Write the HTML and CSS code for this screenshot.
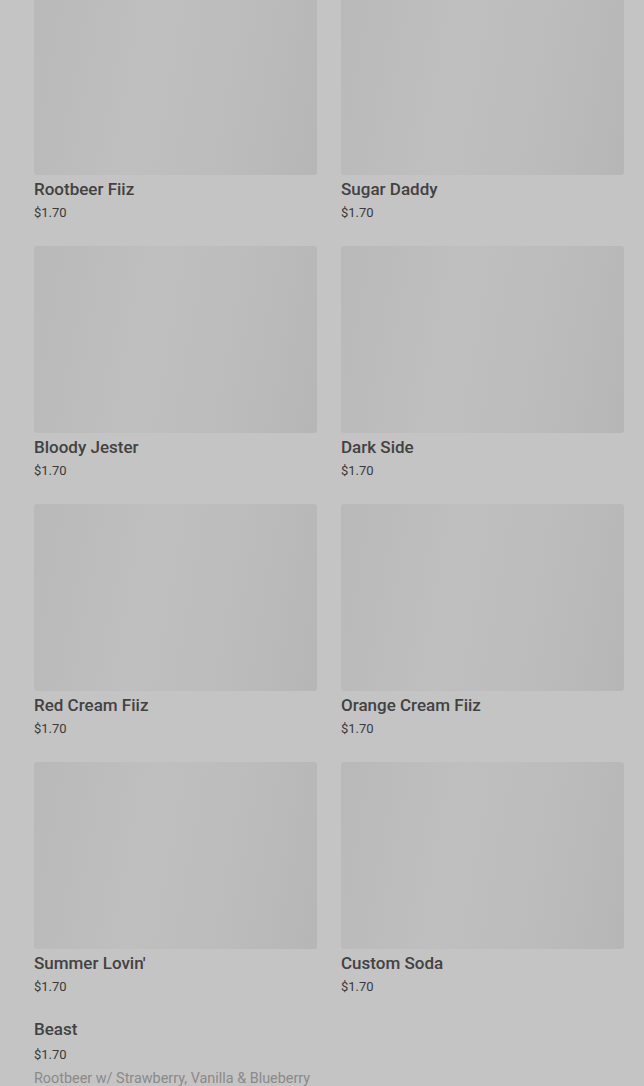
FILE: index.html
```html
<!DOCTYPE html>
<html lang="en">
<head>
  <meta charset="UTF-8">
  <meta name="viewport" content="width=device-width, initial-scale=1.0">
  <title>Sodas</title>
  <link rel="stylesheet" href="styles.css">
</head>
<body>

  <div id="products">
    <div class="product">
      <div class="thumb"></div>
      <h3>Rootbeer Fiiz</h3>
      <p class="price">$1.70</p>
    </div>
    <div class="product">
      <div class="thumb"></div>
      <h3>Sugar Daddy</h3>
      <p class="price">$1.70</p>
    </div>
    <div class="product">
      <div class="thumb"></div>
      <h3>Bloody Jester</h3>
      <p class="price">$1.70</p>
    </div>
    <div class="product">
      <div class="thumb"></div>
      <h3>Dark Side</h3>
      <p class="price">$1.70</p>
    </div>
    <div class="product">
      <div class="thumb"></div>
      <h3>Red Cream Fiiz</h3>
      <p class="price">$1.70</p>
    </div>
    <div class="product">
      <div class="thumb"></div>
      <h3>Orange Cream Fiiz</h3>
      <p class="price">$1.70</p>
    </div>
    <div class="product">
      <div class="thumb"></div>
      <h3>Summer Lovin'</h3>
      <p class="price">$1.70</p>
    </div>
    <div class="product">
      <div class="thumb"></div>
      <h3>Custom Soda</h3>
      <p class="price">$1.70</p>
    </div>
    <div class="product no-thumb">
      <h3>Beast</h3>
      <p class="price">$1.70</p>
      <p class="desc">Rootbeer w/ Strawberry, Vanilla &amp; Blueberry</p>
    </div>
  </div>

</body>
</html>
```

FILE: styles.css
```css
body {
  font-family: Roboto, 'Noto Sans', sans-serif;
  margin: 0;
  padding: 0;
  background-color: #c4c4c4; /* dimmed page */
  color: #3d3d3d;
  overflow: hidden;
}

#products {
  display: grid;
  grid-template-columns: 1fr 1fr;
  column-gap: 24px;
  row-gap: 23px;
  padding: 0 20px 0 34px;
  margin-top: -12px;
}

.thumb {
  height: 187px;
  border-radius: 3px;
  background: linear-gradient(100deg, #b9b9b9 0%, #bfbfbf 40%, #bcbcbc 70%, #b6b6b6 100%);
}

.product h3 {
  margin: 3px 0 0;
  font-size: 17px;
  font-weight: 500;
  line-height: 22px;
  color: #424242;
}

.price {
  margin: 3px 0 0;
  font-size: 13px;
  line-height: 20px;
  color: #3a3a3a;
}

.no-thumb h3 {
  margin-top: -2px;
}

.no-thumb .price {
  margin-top: 5px;
}

.desc {
  margin: 4px 0 0;
  font-size: 14.4px;
  line-height: 20px;
  color: #8a8a8a;
  white-space: nowrap;
}
```
